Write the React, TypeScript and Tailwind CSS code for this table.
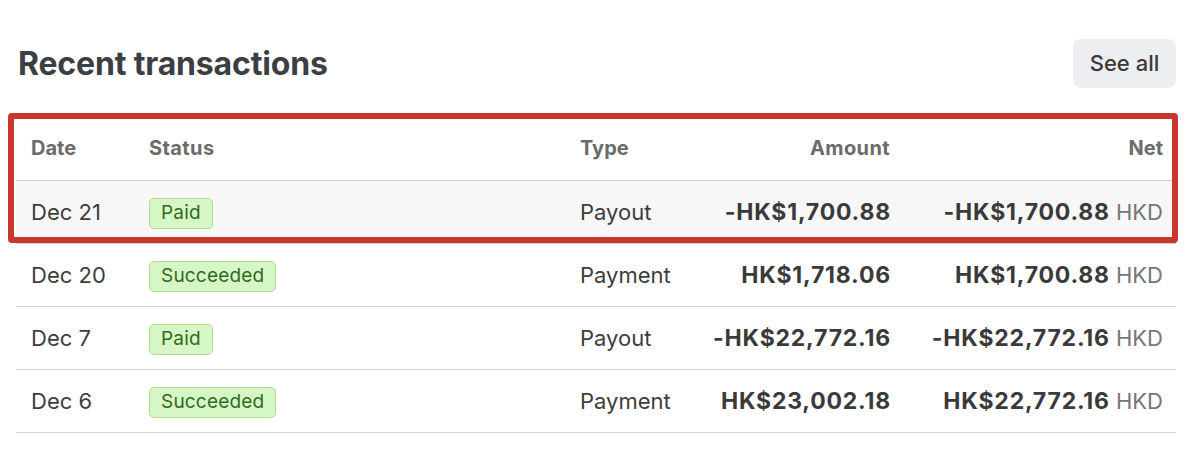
import React from 'react';

type Row = {
  date: string;
  status: 'Paid' | 'Succeeded';
  type: string;
  amount: string;
  net: string;
};

const rows: Row[] = [
  { date: 'Dec 21', status: 'Paid', type: 'Payout', amount: '-HK$1,700.88', net: '-HK$1,700.88' },
  { date: 'Dec 20', status: 'Succeeded', type: 'Payment', amount: 'HK$1,718.06', net: 'HK$1,700.88' },
  { date: 'Dec 7', status: 'Paid', type: 'Payout', amount: '-HK$22,772.16', net: '-HK$22,772.16' },
  { date: 'Dec 6', status: 'Succeeded', type: 'Payment', amount: 'HK$23,002.18', net: 'HK$22,772.16' }
];

const gridCols = 'grid grid-cols-[118px_431px_120px_190px_273px] items-center pl-[15px] pr-[13px]';

const StatusBadge: React.FC<{ label: string }> = ({ label }) => (
  <span className="inline-flex h-[31px] items-center rounded-[5px] border border-[#aedd96] bg-[#d7f6c6] px-[11px] text-[19px] tracking-[0.01em] text-[#2f6b22]">
    {label}
  </span>
);

const App: React.FC = () => {
  return (
    <div className="min-h-[465px] bg-white pl-4 pr-[23px] font-['Inter','Liberation_Sans',sans-serif]">
      {/* Header */}
      <div className="flex items-center justify-between pt-[39px]">
        <h2 className="pl-[2px] text-[32px] font-bold tracking-[-0.005em] text-[#3b3e43]">Recent transactions</h2>
        <button className="h-[49px] w-[103px] rounded-lg bg-[#eceef1] text-[22px] font-medium text-[#3a3a3c]">
          See all
        </button>
      </div>

      {/* Table */}
      <div className="relative mt-[30px]">
        <div className={`${gridCols} h-[63px] border-b border-[#d0d0d0] text-[20px] font-bold text-[#6b6b6b]`}>
          <div className="-mt-[2px]">Date</div>
          <div className="-mt-[2px] tracking-[0.02em]">Status</div>
          <div className="-mt-[2px]">Type</div>
          <div className="-mt-[2px] text-right tracking-[0.02em]">Amount</div>
          <div className="-mt-[2px] text-right">Net</div>
        </div>

        {rows.map((row, i) => (
          <div
            key={row.date}
            className={`${gridCols} h-[63px] border-b border-[#d0d0d0] text-[22px] text-[#3d3d3d] ${i === 0 ? 'bg-[#f7f7f7]' : ''}`}
          >
            <div>{row.date}</div>
            <div>
              <StatusBadge label={row.status} />
            </div>
            <div>{row.type}</div>
            <div className="-mr-[1px] text-right text-[23px] font-bold tracking-[0.035em] text-[#3a3a3a]">{row.amount}</div>
            <div className="text-right">
              <span className="text-[23px] font-bold tracking-[0.035em] text-[#3a3a3a]">{row.net}</span>
              <span className="text-[#767676]"> HKD</span>
            </div>
          </div>
        ))}

        {/* highlight annotation */}
        <div className="pointer-events-none absolute -left-2 -right-[2px] -top-[5px] h-[130px] rounded-[4px] border-[6px] border-[#c8372d]" />
      </div>
    </div>
  );
};

export default App;
